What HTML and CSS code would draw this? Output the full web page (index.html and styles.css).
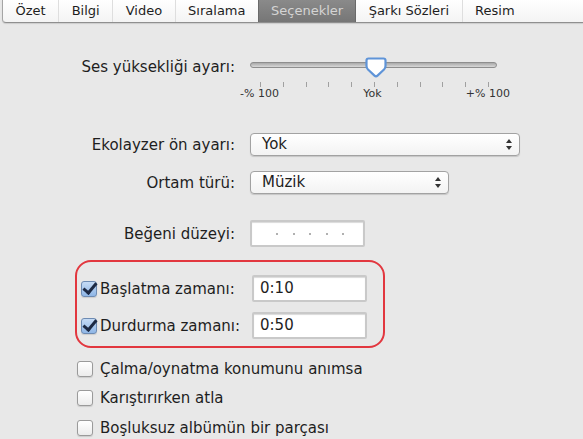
FILE: index.html
```html
<!DOCTYPE html>
<html lang="tr">
<head>
    <meta charset="UTF-8">
    <meta name="viewport" content="width=device-width, initial-scale=1.0">
    <title>Seçenekler</title>
    <link rel="stylesheet" href="styles.css">
</head>
<body>
    <nav class="tabs">
        <span class="tab">Özet</span>
        <span class="tab">Bilgi</span>
        <span class="tab">Video</span>
        <span class="tab">Sıralama</span>
        <span class="tab active">Seçenekler</span>
        <span class="tab">Şarkı Sözleri</span>
        <span class="tab last">Resim</span>
    </nav>

    <main class="prefs">
        <!-- volume adjustment -->
        <div class="row slider-row">
            <label class="label">Ses yüksekliği ayarı:</label>
            <div class="slider">
                <div class="track">
                    <svg class="knob" width="22" height="21" viewBox="0 0 22 21">
                        <path d="M3.5 1.5 H18.5 Q20.5 1.5 20.5 3.5 V9 Q20.5 11 19 12.5 L12.5 18.6 Q11 20 9.5 18.6 L3 12.5 Q1.5 11 1.5 9 V3.5 Q1.5 1.5 3.5 1.5 Z" fill="#fff" stroke="#5f94d8" stroke-width="2.2"/>
                    </svg>
                </div>
                <div class="ticks">
                    <i></i><i></i><i></i><i></i><i></i><i></i><i></i><i></i><i></i><i></i><i></i>
                </div>
                <div class="tick-labels">
                    <span>-% 100</span>
                    <span>Yok</span>
                    <span>+% 100</span>
                </div>
            </div>
        </div>

        <div class="row eq-row">
            <label class="label">Ekolayzer ön ayarı:</label>
            <div class="select wide">Yok
                <svg class="arrows" width="6" height="11" viewBox="0 0 6 11"><path d="M3 0 L6 4 H0 Z M0 7 H6 L3 11 Z" fill="#333"/></svg>
            </div>
        </div>

        <div class="row kind-row">
            <label class="label">Ortam türü:</label>
            <div class="select narrow">Müzik
                <svg class="arrows" width="6" height="11" viewBox="0 0 6 11"><path d="M3 0 L6 4 H0 Z M0 7 H6 L3 11 Z" fill="#333"/></svg>
            </div>
        </div>

        <div class="row rating-row">
            <label class="label">Beğeni düzeyi:</label>
            <div class="field rating"><i></i><i></i><i></i><i></i><i></i></div>
        </div>

        <!-- start / stop time -->
        <div class="times">
            <div class="time-row">
                <span class="check-label"><span class="checkbox checked"></span>Başlatma zamanı:</span>
                <div class="field">0:10</div>
            </div>
            <div class="time-row">
                <span class="check-label"><span class="checkbox checked"></span>Durdurma zamanı:</span>
                <div class="field">0:50</div>
            </div>
        </div>

        <div class="options">
            <div class="option"><span class="checkbox"></span>Çalma/oynatma konumunu anımsa</div>
            <div class="option"><span class="checkbox"></span>Karıştırırken atla</div>
            <div class="option"><span class="checkbox"></span>Boşluksuz albümün bir parçası</div>
        </div>
    </main>
</body>
</html>
```

FILE: styles.css
```css
body {
    margin: 0;
    width: 583px;
    height: 439px;
    overflow: hidden;
    background-color: #e8e8e8;
    font-family: "DejaVu Sans", Verdana, sans-serif;
    font-size: 15px;
    color: #1e1e1e;
}

/* tab strip */
.tabs {
    display: flex;
    height: 22px;
    margin-left: 2px;
    background: linear-gradient(#ffffff, #f4f4f4);
    border-left: 1px solid #a5a5a5;
    border-bottom: 1px solid #8f8f8f;
    border-bottom-left-radius: 4px;
    box-shadow: 0 1px 1px rgba(0,0,0,0.12);
    white-space: nowrap;
}
.tab {
    padding: 0 12.5px;
    line-height: 22px;
    font-size: 13px;
    color: #1e1e1e;
    border-left: 1px solid #dedede;
}
.tab:first-child {
    border-left: none;
}
.tab.active {
    padding: 0 12px;
    background: linear-gradient(#8a8a8a, #767676);
    color: #d4d4d4;
    border-left: 1px solid #6a6a6a;
    border-right: 1px solid #6a6a6a;
}
.tab.active + .tab {
    border-left: none;
}
.tab.last {
    flex: 1;
}

/* form rows */
.row {
    display: grid;
    grid-template-columns: 235px auto;
    column-gap: 15px;
    align-items: center;
}
.label {
    text-align: right;
    white-space: nowrap;
}

.slider-row {
    margin-top: 32px;
    align-items: start;
    column-gap: 5px;
}
.slider-row .label {
    line-height: 24px;
}
.slider {
    width: 270px;
}
.track {
    position: relative;
    width: 247px;
    height: 6px;
    margin: 7px 0 0 10px;
    box-sizing: border-box;
    border: 1px solid #8e8e8e;
    border-radius: 3px;
    background: linear-gradient(#a9a9a9, #d8d8d8);
}
.knob {
    position: absolute;
    left: 114px;
    top: -6px;
}
.ticks {
    display: flex;
    justify-content: space-between;
    margin: 14px 21px 0 20px;
    height: 5px;
}
.ticks i {
    width: 1px;
    background: #a0a0a0;
}
.tick-labels {
    display: flex;
    justify-content: space-between;
    font-size: 11px;
    line-height: 13px;
    color: #333;
}

.select {
    position: relative;
    height: 23px;
    box-sizing: border-box;
    padding-left: 11px;
    line-height: 21px;
    background: linear-gradient(#ffffff, #f3f3f3);
    border: 1px solid #a2a2a2;
    border-radius: 4px;
    box-shadow: 0 1px 1px rgba(0,0,0,0.15);
}
.select.wide {
    width: 270px;
}
.select.narrow {
    width: 199px;
}
.arrows {
    position: absolute;
    right: 7px;
    top: 5px;
}
.eq-row {
    margin-top: 33px;
}
.kind-row {
    margin-top: 15px;
}
.rating-row {
    margin-top: 26px;
}

.field {
    width: 115px;
    height: 27px;
    box-sizing: border-box;
    padding-left: 6px;
    line-height: 23px;
    background: #fff;
    border: 2px solid #c9c9c9;
    border-radius: 2px;
    box-shadow: inset 0 1px 1px rgba(0,0,0,0.15);
}
.rating {
    display: flex;
    align-items: center;
    gap: 14.5px;
    padding-left: 24px;
}
.rating i {
    width: 2px;
    height: 2px;
    background: #b0b0b0;
}

/* red highlight round start/stop times */
.times {
    width: 310px;
    height: 88px;
    box-sizing: border-box;
    margin: 13px 0 0 75px;
    padding: 13px 0 0 4px;
    border: 2px solid #e2373f;
    border-radius: 16px;
}
.time-row {
    display: flex;
    align-items: center;
}
.time-row + .time-row {
    margin-top: 10px;
}
.check-label {
    display: flex;
    align-items: center;
    width: 171px;
    white-space: nowrap;
}

.checkbox {
    flex: none;
    position: relative;
    width: 16px;
    height: 16px;
    box-sizing: border-box;
    margin-right: 3px;
    border: 1px solid #9a9a9a;
    border-radius: 3px;
    background: linear-gradient(#ffffff, #ececec);
    box-shadow: 0 1px 1px rgba(0,0,0,0.12);
}
.checkbox.checked {
    border-color: #6d8bb3;
    background: linear-gradient(#c5dbf5, #8fb6e6);
}
.checkbox.checked::after {
    content: "";
    position: absolute;
    left: 4px;
    top: -2px;
    width: 5px;
    height: 11px;
    border-right: 3px solid #1d2a44;
    border-bottom: 3px solid #1d2a44;
    transform: rotate(40deg);
}

.options {
    margin: 6px 0 0 77px;
}
.option {
    display: flex;
    align-items: center;
    height: 29.5px;
    white-space: nowrap;
}
.option .checkbox {
    margin-right: 7px;
}
```
